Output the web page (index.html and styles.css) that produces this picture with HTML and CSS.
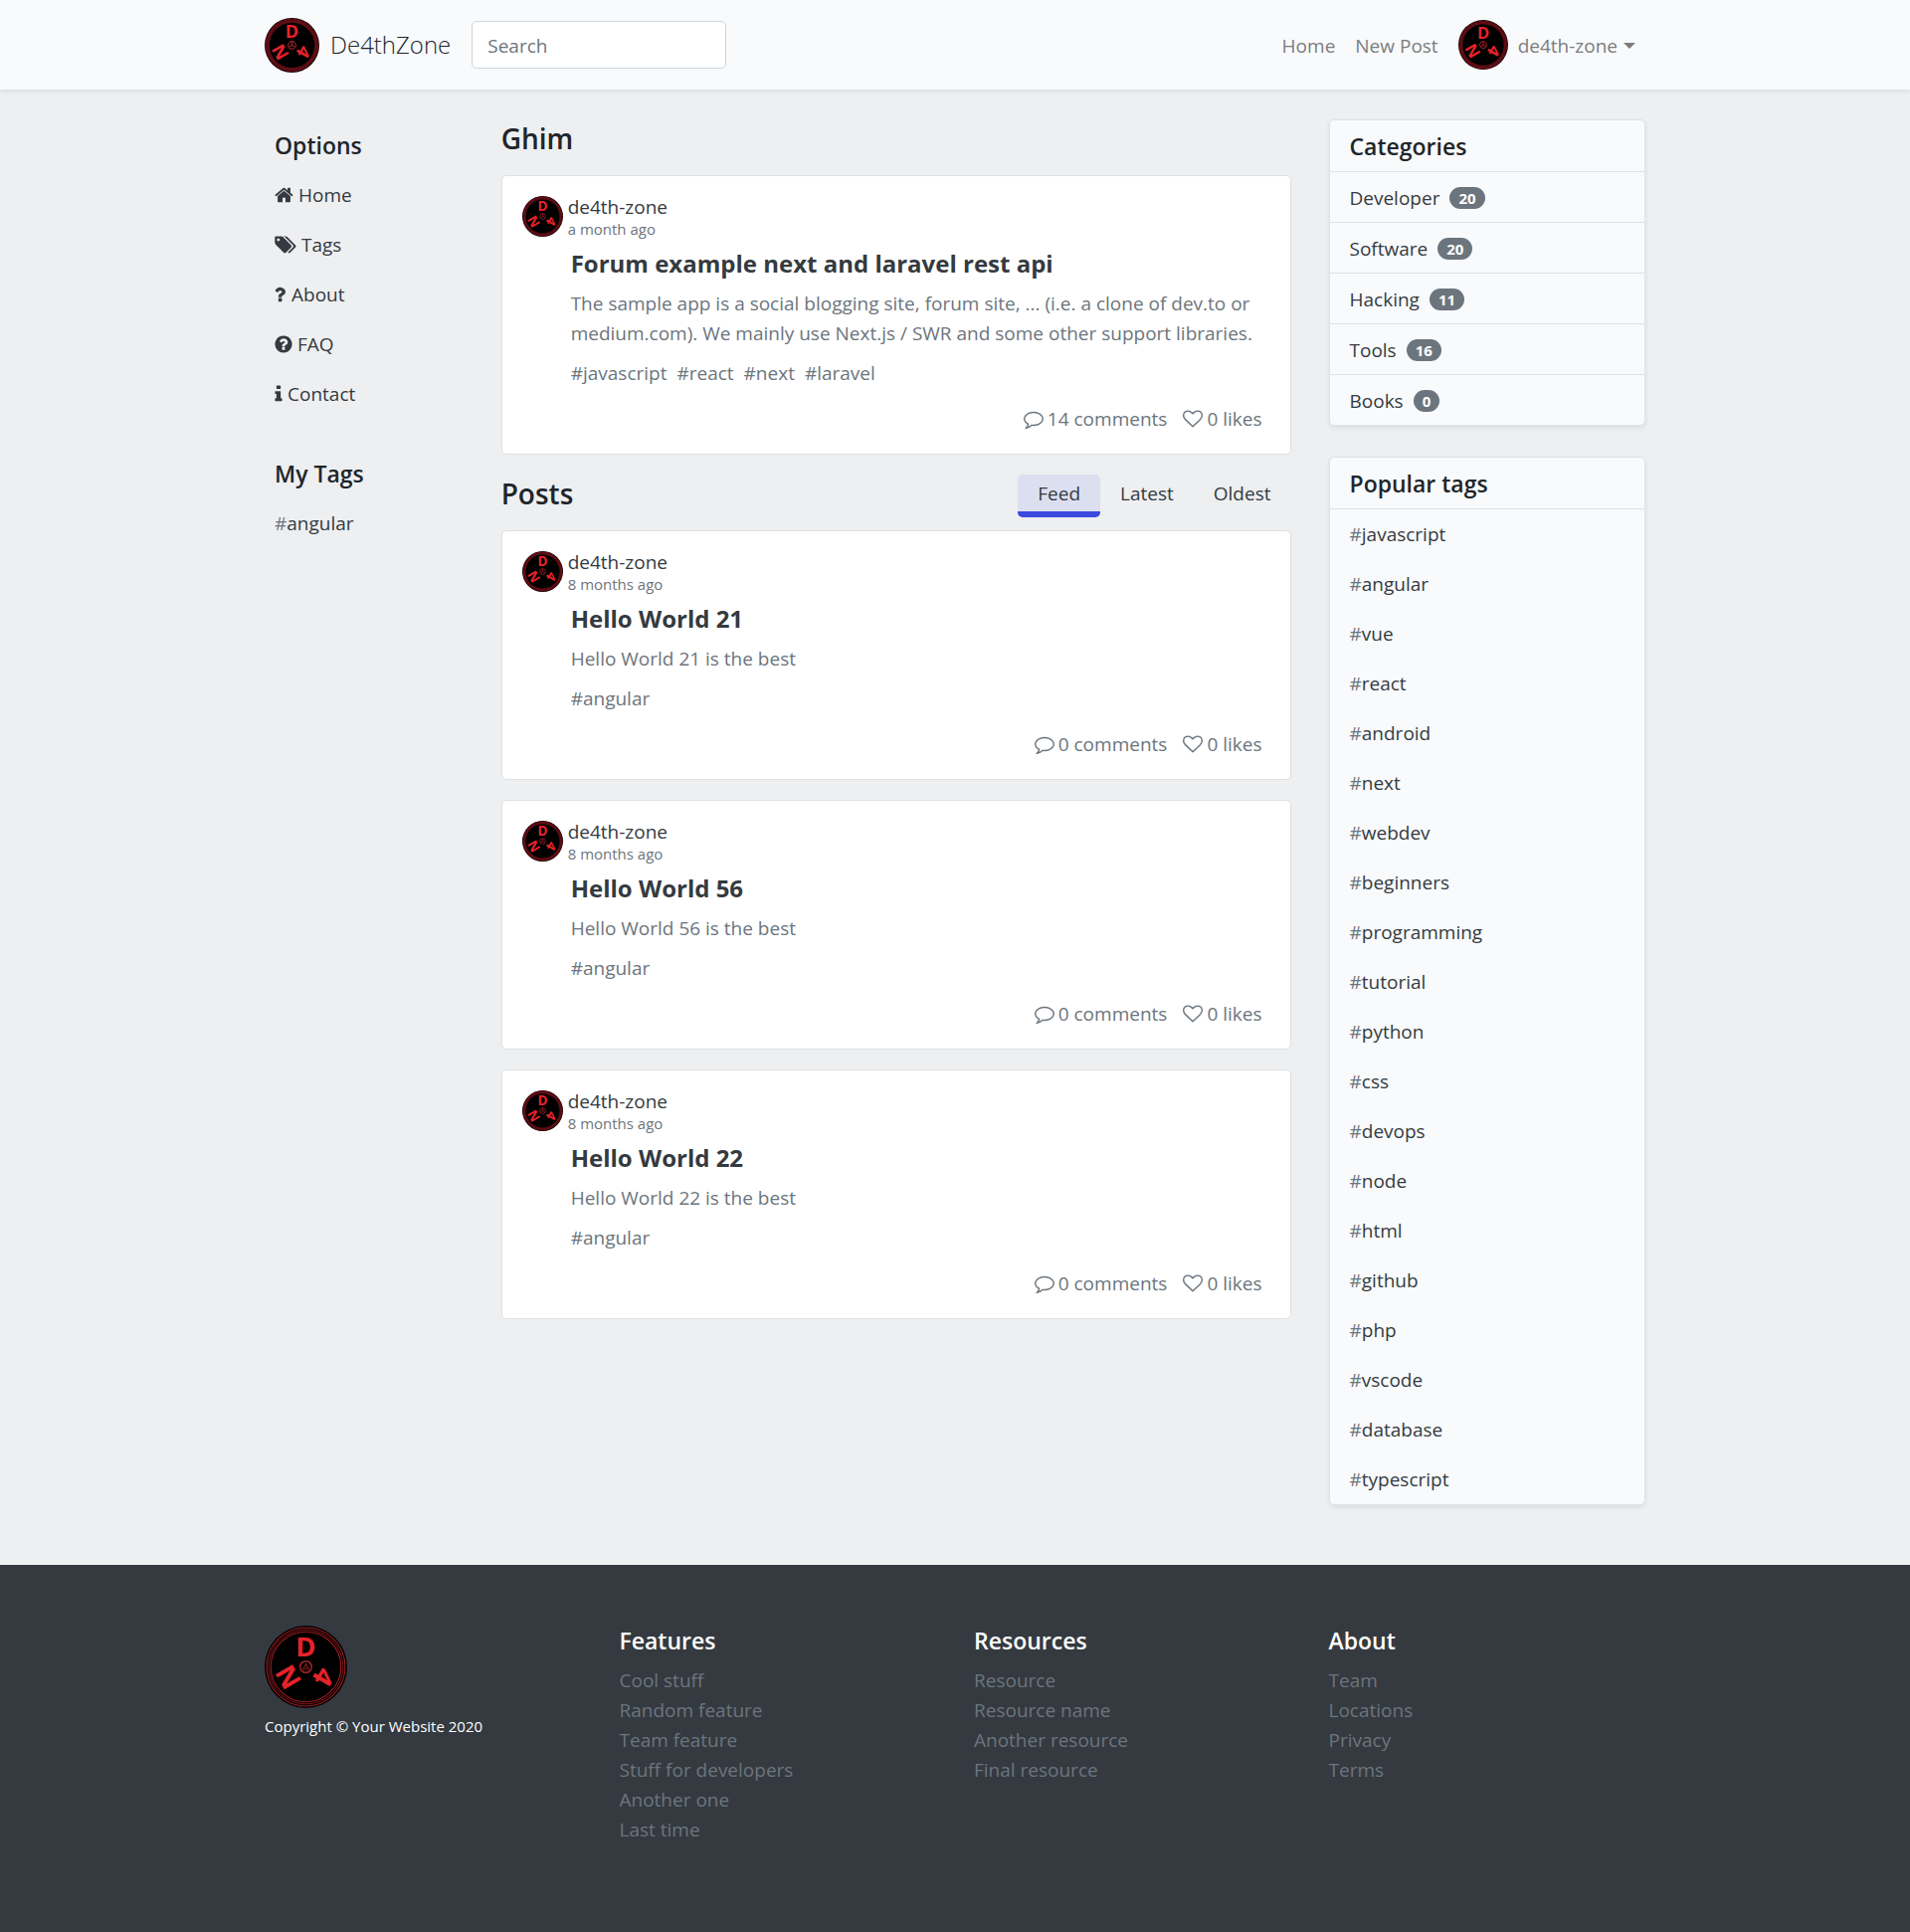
FILE: index.html
```html
<!DOCTYPE html>
<html lang="en">
<head>
<meta charset="utf-8">
<meta name="viewport" content="width=device-width, initial-scale=1">
<title>De4thZone</title>
<link rel="stylesheet" href="styles.css">
</head>
<body>
<svg class="sprite" aria-hidden="true">
  <symbol id="disc" viewBox="0 0 100 100">
    <circle cx="50" cy="50" r="50" fill="#120103"/>
    <circle cx="50" cy="50" r="45" fill="none" stroke="#5c0d13" stroke-width="7"/>
    <circle cx="50" cy="50" r="42" fill="#000"/>
    <circle cx="50" cy="50" r="42" fill="none" stroke="#7d151b" stroke-width="1"/>
    <circle cx="50" cy="50" r="7" fill="none" stroke="#a3242a" stroke-width="2"/>
    <path d="M50 50V44M50 50l5 3M50 50l-5 3" stroke="#a3242a" stroke-width="2"/>
  </symbol>
  <symbol id="disc-large" viewBox="0 0 100 100">
    <circle cx="50" cy="50" r="50" fill="#000"/>
    <g fill="none" stroke="#9d1c22">
      <circle cx="50" cy="50" r="47.500" stroke-width="1.300"/>
      <circle cx="50" cy="50" r="45" stroke-width="1"/>
      <circle cx="50" cy="50" r="42.500" stroke-width="1.300"/>
    </g>
    <circle cx="50" cy="50" r="7" fill="none" stroke="#a3242a" stroke-width="1.800"/>
    <path d="M50 50V45M50 50l4 3M50 50l-4 3M46 53h8l-4-7z" fill="none" stroke="#8d1a20" stroke-width="1"/>
  </symbol>
  <symbol id="home" viewBox="64 0 1664 1792"><path d="M1472 992v480q0 26-19 45t-45 19h-384v-384h-256v384h-384q-26 0-45-19t-19-45v-480q0-1 .5-3t.5-3l575-474 575 474q1 2 1 6zm223-69l-62 74q-8 9-21 11h-3q-13 0-21-7l-692-577-692 577q-12 8-24 7-13-2-21-11l-62-74q-8-10-7-23.500t11-21.500l719-599q32-26 76-26t76 26l244 204v-195q0-14 9-23t23-9h192q14 0 23 9t9 23v408l219 182q10 8 11 21.500t-7 23.500z"/></symbol>
  <symbol id="tags" viewBox="128 0 1920 1792"><path d="M576 448q0-53-37.500-90.500t-90.500-37.500-90.500 37.500-37.500 90.500 37.500 90.500 90.500 37.500 90.500-37.500 37.500-90.500zm1067 576q0 53-37 90l-491 492q-39 37-91 37-53 0-90-37l-715-716q-38-37-64.500-101t-26.500-117v-416q0-52 38-90t90-38h416q53 0 117 26.500t102 64.500l715 714q37 39 37 91zm384 0q0 53-37 90l-491 492q-39 37-91 37-36 0-59-14t-53-45l470-470q37-37 37-90 0-52-37-91l-715-714q-38-38-102-64.500t-117-26.500h224q53 0 117 26.500t102 64.500l715 714q37 39 37 91z"/></symbol>
  <symbol id="question" viewBox="64 0 1024 1792"><path d="M704 1256v240q0 16-12 28t-28 12h-240q-16 0-28-12t-12-28v-240q0-16 12-28t28-12h240q16 0 28 12t12 28zm316-600q0 54-15.500 101t-35 76.500-55 59.500-57.500 43.500-61 35.500q-41 23-68.500 65t-27.500 67q0 17-12 32.500t-28 15.500h-240q-15 0-25.500-18.500t-10.500-37.500v-45q0-83 65-156.500t143-108.500q59-27 84-56t25-76q0-42-46.500-74t-107.500-32q-65 0-108 29-35 25-107 115-13 16-31 16-12 0-25-8l-164-125q-13-10-15.500-25t5.500-28q160-266 464-266 80 0 161 31t146 83 106 127.500 41 158.500z"/></symbol>
  <symbol id="faq" viewBox="128 0 1536 1792"><path d="M1024 1376v-192q0-14-9-23t-23-9h-192q-14 0-23 9t-9 23v192q0 14 9 23t23 9h192q14 0 23-9t9-23zm256-672q0-88-55.500-163t-138.500-116-170-41q-243 0-371 213-15 24 8 42l132 100q7 6 19 6 16 0 25-12 53-68 86-92 34-24 86-24 48 0 85.500 26t37.500 59q0 38-20 61t-68 45q-63 28-115.500 86.500t-52.500 125.500v36q0 14 9 23t23 9h192q14 0 23-9t9-23q0-19 21.500-49.500t54.500-49.500q32-18 49-28.500t46-35 44.500-48 28-60.500 12.500-81zm384 192q0 209-103 385.500t-279.500 279.500-385.500 103-385.500-103-279.500-279.500-103-385.500 103-385.500 279.500-279.500 385.500-103 385.500 103 279.500 279.500 103 385.500z"/></symbol>
  <symbol id="info" viewBox="576 0 640 1792"><path d="M1216 1344v128q0 26-19 45t-45 19h-512q-26 0-45-19t-19-45v-128q0-26 19-45t45-19h64v-384h-64q-26 0-45-19t-19-45v-128q0-26 19-45t45-19h384q26 0 45 19t19 45v576h64q26 0 45 19t19 45zm-128-1152v192q0 26-19 45t-45 19h-256q-26 0-45-19t-19-45v-192q0-26 19-45t45-19h256q26 0 45 19t19 45z"/></symbol>
  <symbol id="comment" viewBox="0 0 1792 1792"><path d="M896 384q-204 0-381.500 69.500t-282 187.500-104.500 255q0 112 71.500 213.500t201.500 175.500l87 50-27 96q-24 91-70 172 152-63 275-171l43-38 57 6q69 8 130 8 204 0 381.500-69.500t282-187.500 104.500-255-104.500-255-282-187.500-381.500-69.500zm896 512q0 174-120 321.500t-326 233-450 85.500q-70 0-145-8-198 175-460 242-49 14-114 22h-5q-15 0-27-10.500t-16-27.500v-1q-3-4-.5-12t2-10 4.500-9.500l6-9 7-8.500 8-9q7-8 31-34.500t34.500-38 31-39.500 32.500-51 27-59 26-76q-157-89-247.500-220t-90.500-281q0-174 120-321.500t326-233 450-85.500 450 85.500 326 233 120 321.500z"/></symbol>
  <symbol id="heart" viewBox="0 0 1792 1792"><path d="M1664 596q0-81-21.500-143t-55-98.500-81.500-59.500-94-31-98-8-112 25.500-110.500 64-86.500 72-60 61.500q-18 22-49 22t-49-22q-24-28-60-61.500t-86.500-72-110.500-64-112-25.500-98 8-94 31-81.500 59.500-55 98.500-21.500 143q0 168 187 355l581 560 580-559q188-188 188-356zm128 0q0 221-229 450l-623 600q-18 18-44 18t-44-18l-624-602q-10-8-27.500-26t-55.500-65.500-68-97.500-53.500-121-23.500-138q0-220 127-344t351-124q62 0 126.500 21.500t120 58 95.500 68.500 76 68q36-36 76-68t95.500-68.500 120-58 126.500-21.500q224 0 351 124t127 344z"/></symbol>
</svg>

<header class="navbar">
  <div class="container navbar-inner">
    <a class="brand" href="#"><svg class="logo brand-logo" viewBox="0 0 100 100" aria-hidden="true"><use href="#disc"/><text x="50" y="37">D</text><text x="50" y="37" transform="rotate(120 50 50)">4</text><text x="50" y="37" transform="rotate(240 50 50)">N</text></svg>De4thZone</a>
    <input class="search" type="search" placeholder="Search" aria-label="Search">
    <nav class="nav" aria-label="Main">
      <a class="nav-link" href="#">Home</a>
      <a class="nav-link" href="#">New Post</a>
      <a class="nav-avatar" href="#" aria-label="Profile"><svg class="logo" viewBox="0 0 100 100" aria-hidden="true"><use href="#disc"/><text x="50" y="37">D</text><text x="50" y="37" transform="rotate(120 50 50)">4</text><text x="50" y="37" transform="rotate(240 50 50)">N</text></svg></a>
      <button class="nav-link user-menu" type="button">de4th-zone<span class="caret"></span></button>
    </nav>
  </div>
</header>

<main class="container layout">
  <aside class="sidebar">
    <section>
      <h2 class="side-title">Options</h2>
      <ul class="list">
        <li><a class="side-link" href="#"><svg class="icon icon-home" aria-hidden="true"><use href="#home"/></svg>Home</a></li>
        <li><a class="side-link" href="#"><svg class="icon icon-tags" aria-hidden="true"><use href="#tags"/></svg>Tags</a></li>
        <li><a class="side-link" href="#"><svg class="icon icon-question" aria-hidden="true"><use href="#question"/></svg>About</a></li>
        <li><a class="side-link" href="#"><svg class="icon icon-faq" aria-hidden="true"><use href="#faq"/></svg>FAQ</a></li>
        <li><a class="side-link" href="#"><svg class="icon icon-info" aria-hidden="true"><use href="#info"/></svg>Contact</a></li>
      </ul>
    </section>
    <section>
      <h2 class="side-title">My Tags</h2>
      <ul class="list">
        <li><a class="side-link" href="#"><span><span class="hash">#</span>angular</span></a></li>
      </ul>
    </section>
  </aside>

  <div class="feed">
    <div class="feed-header"><h1 class="feed-title">Ghim</h1></div>
    <article class="post">
      <div class="author">
        <svg class="logo author-avatar" viewBox="0 0 100 100" aria-hidden="true"><use href="#disc"/><text x="50" y="37">D</text><text x="50" y="37" transform="rotate(120 50 50)">4</text><text x="50" y="37" transform="rotate(240 50 50)">N</text></svg>
        <div><a class="author-name" href="#">de4th-zone</a><time class="time">a month ago</time></div>
      </div>
      <div class="post-body">
        <h2 class="post-title"><a href="#">Forum example next and laravel rest api</a></h2>
        <p class="post-text">The sample app is a social blogging site, forum site, ... (i.e. a clone of dev.to or medium.com). We mainly use Next.js / SWR and some other support libraries.</p>
        <div class="post-tags"><a href="#">#javascript</a><a href="#">#react</a><a href="#">#next</a><a href="#">#laravel</a></div>
        <div class="stats"><a href="#"><svg class="icon icon-stat" aria-hidden="true"><use href="#comment"/></svg>14 comments</a><a href="#"><svg class="icon icon-stat" aria-hidden="true"><use href="#heart"/></svg>0 likes</a></div>
      </div>
    </article>

    <div class="feed-header">
      <h1 class="feed-title">Posts</h1>
      <div class="tabs">
        <button class="tab tab-active" type="button">Feed</button>
        <button class="tab" type="button">Latest</button>
        <button class="tab" type="button">Oldest</button>
      </div>
    </div>
    <article class="post">
      <div class="author">
        <svg class="logo author-avatar" viewBox="0 0 100 100" aria-hidden="true"><use href="#disc"/><text x="50" y="37">D</text><text x="50" y="37" transform="rotate(120 50 50)">4</text><text x="50" y="37" transform="rotate(240 50 50)">N</text></svg>
        <div><a class="author-name" href="#">de4th-zone</a><time class="time">8 months ago</time></div>
      </div>
      <div class="post-body">
        <h2 class="post-title"><a href="#">Hello World 21</a></h2>
        <p class="post-text">Hello World 21 is the best</p>
        <div class="post-tags"><a href="#">#angular</a></div>
        <div class="stats"><a href="#"><svg class="icon icon-stat" aria-hidden="true"><use href="#comment"/></svg>0 comments</a><a href="#"><svg class="icon icon-stat" aria-hidden="true"><use href="#heart"/></svg>0 likes</a></div>
      </div>
    </article>
    <article class="post">
      <div class="author">
        <svg class="logo author-avatar" viewBox="0 0 100 100" aria-hidden="true"><use href="#disc"/><text x="50" y="37">D</text><text x="50" y="37" transform="rotate(120 50 50)">4</text><text x="50" y="37" transform="rotate(240 50 50)">N</text></svg>
        <div><a class="author-name" href="#">de4th-zone</a><time class="time">8 months ago</time></div>
      </div>
      <div class="post-body">
        <h2 class="post-title"><a href="#">Hello World 56</a></h2>
        <p class="post-text">Hello World 56 is the best</p>
        <div class="post-tags"><a href="#">#angular</a></div>
        <div class="stats"><a href="#"><svg class="icon icon-stat" aria-hidden="true"><use href="#comment"/></svg>0 comments</a><a href="#"><svg class="icon icon-stat" aria-hidden="true"><use href="#heart"/></svg>0 likes</a></div>
      </div>
    </article>
    <article class="post">
      <div class="author">
        <svg class="logo author-avatar" viewBox="0 0 100 100" aria-hidden="true"><use href="#disc"/><text x="50" y="37">D</text><text x="50" y="37" transform="rotate(120 50 50)">4</text><text x="50" y="37" transform="rotate(240 50 50)">N</text></svg>
        <div><a class="author-name" href="#">de4th-zone</a><time class="time">8 months ago</time></div>
      </div>
      <div class="post-body">
        <h2 class="post-title"><a href="#">Hello World 22</a></h2>
        <p class="post-text">Hello World 22 is the best</p>
        <div class="post-tags"><a href="#">#angular</a></div>
        <div class="stats"><a href="#"><svg class="icon icon-stat" aria-hidden="true"><use href="#comment"/></svg>0 comments</a><a href="#"><svg class="icon icon-stat" aria-hidden="true"><use href="#heart"/></svg>0 likes</a></div>
      </div>
    </article>
  </div>

  <aside class="widgets">
    <section class="widget">
      <h2 class="widget-title">Categories</h2>
      <ul class="list">
        <li class="category"><a href="#">Developer</a><span class="badge">20</span></li>
        <li class="category"><a href="#">Software</a><span class="badge">20</span></li>
        <li class="category"><a href="#">Hacking</a><span class="badge">11</span></li>
        <li class="category"><a href="#">Tools</a><span class="badge">16</span></li>
        <li class="category"><a href="#">Books</a><span class="badge">0</span></li>
      </ul>
    </section>
    <section class="widget">
      <h2 class="widget-title">Popular tags</h2>
      <ul class="list tag-list">
        <li><a href="#"><span class="hash">#</span>javascript</a></li>
        <li><a href="#"><span class="hash">#</span>angular</a></li>
        <li><a href="#"><span class="hash">#</span>vue</a></li>
        <li><a href="#"><span class="hash">#</span>react</a></li>
        <li><a href="#"><span class="hash">#</span>android</a></li>
        <li><a href="#"><span class="hash">#</span>next</a></li>
        <li><a href="#"><span class="hash">#</span>webdev</a></li>
        <li><a href="#"><span class="hash">#</span>beginners</a></li>
        <li><a href="#"><span class="hash">#</span>programming</a></li>
        <li><a href="#"><span class="hash">#</span>tutorial</a></li>
        <li><a href="#"><span class="hash">#</span>python</a></li>
        <li><a href="#"><span class="hash">#</span>css</a></li>
        <li><a href="#"><span class="hash">#</span>devops</a></li>
        <li><a href="#"><span class="hash">#</span>node</a></li>
        <li><a href="#"><span class="hash">#</span>html</a></li>
        <li><a href="#"><span class="hash">#</span>github</a></li>
        <li><a href="#"><span class="hash">#</span>php</a></li>
        <li><a href="#"><span class="hash">#</span>vscode</a></li>
        <li><a href="#"><span class="hash">#</span>database</a></li>
        <li><a href="#"><span class="hash">#</span>typescript</a></li>
      </ul>
    </section>
  </aside>
</main>

<footer class="footer">
  <div class="container footer-grid">
    <div>
      <svg class="logo footer-logo" viewBox="0 0 100 100" aria-hidden="true"><use href="#disc-large"/><text x="50" y="37">D</text><text x="50" y="37" transform="rotate(120 50 50)">4</text><text x="50" y="37" transform="rotate(240 50 50)">N</text></svg>
      <small class="copyright">Copyright © Your Website 2020</small>
    </div>
    <section>
      <h2 class="footer-title">Features</h2>
      <ul class="list footer-list">
        <li><a href="#">Cool stuff</a></li>
        <li><a href="#">Random feature</a></li>
        <li><a href="#">Team feature</a></li>
        <li><a href="#">Stuff for developers</a></li>
        <li><a href="#">Another one</a></li>
        <li><a href="#">Last time</a></li>
      </ul>
    </section>
    <section>
      <h2 class="footer-title">Resources</h2>
      <ul class="list footer-list">
        <li><a href="#">Resource</a></li>
        <li><a href="#">Resource name</a></li>
        <li><a href="#">Another resource</a></li>
        <li><a href="#">Final resource</a></li>
      </ul>
    </section>
    <section>
      <h2 class="footer-title">About</h2>
      <ul class="list footer-list">
        <li><a href="#">Team</a></li>
        <li><a href="#">Locations</a></li>
        <li><a href="#">Privacy</a></li>
        <li><a href="#">Terms</a></li>
      </ul>
    </section>
  </div>
</footer>
</body>
</html>
```
FILE: styles.css
```css
* {
  box-sizing: border-box;
}

body {
  margin: 0;
  background: #eeeff1;
  color: #212529;
  font-family: "Open Sans", "Noto Sans", sans-serif;
  font-size: 19px;
  line-height: 30px;
}

a {
  color: inherit;
  text-decoration: none;
}

button,
input {
  font: inherit;
}

h1,
h2,
p {
  margin: 0;
}

.sprite {
  position: absolute;
  width: 0;
  height: 0;
}

.logo {
  flex: none;
  fill: #e6222a;
  font-size: 33px;
  font-weight: 700;
  text-anchor: middle;
}

.container {
  max-width: 1428px;
  margin: 0 auto;
  padding: 0 20px;
}

.list {
  margin: 0;
  padding: 0;
  list-style: none;
}

.icon {
  flex: none;
  height: 20px;
  fill: currentColor;
}

.icon-home { width: 19px; }
.icon-tags { width: 22px; }
.icon-question { width: 12px; }
.icon-faq { width: 18px; }
.icon-info { width: 8px; }
.icon-stat { width: 20px; }

/* Top bar */
.navbar {
  background: #f8fafc;
  box-shadow: 0 2px 5px rgba(0, 0, 0, 0.08);
}

.navbar-inner {
  display: flex;
  align-items: center;
  min-height: 90px;
}

.brand {
  display: flex;
  align-items: center;
  gap: 11px;
  margin-right: 21px;
  font-size: 24px;
  font-weight: 300;
  line-height: 32px;
}

.brand-logo {
  width: 55px;
  height: 55px;
}

.search {
  width: 256px;
  height: 48px;
  padding: 2px 15px 0;
  border: 1px solid #ced4da;
  border-radius: 5px;
  background: #fff;
  color: #495057;
}

.search::placeholder {
  color: #6c757d;
  opacity: 1;
}

.nav {
  display: flex;
  align-items: center;
  margin-left: auto;
}

.nav-link {
  padding: 11px 10px 9px;
  border: 0;
  background: none;
  color: #7c7d7e;
}

.nav-avatar {
  display: flex;
  margin-left: 10px;
}

.nav-avatar svg {
  width: 50px;
  height: 50px;
}

.user-menu {
  display: flex;
  align-items: center;
  gap: 6px;
}

.caret {
  border: 6px solid transparent;
  border-top-color: currentColor;
  border-bottom: 0;
}

/* Three column page */
.layout {
  display: grid;
  grid-template-columns: repeat(12, minmax(0, 1fr));
  column-gap: 38px;
  padding-top: 30px;
  padding-bottom: 60px;
}

.sidebar {
  grid-column: span 2;
  display: flex;
  flex-direction: column;
  gap: 30px;
  padding-top: 1px;
}

.side-title {
  padding: 10px;
  font-size: 23px;
  font-weight: 600;
}

.side-link {
  display: flex;
  align-items: center;
  gap: 5px;
  padding: 10px;
  color: #343a40;
}

.hash {
  color: #6c757d;
}

/* Posts */
.feed {
  grid-column: span 7;
}

.feed-header {
  display: flex;
  align-items: flex-start;
  justify-content: space-between;
  height: 56px;
}

.feed-title {
  font-size: 28px;
  font-weight: 600;
  line-height: 38px;
}

.tabs {
  display: flex;
}

.tab {
  padding: 4px 20px 3px;
  border: 0;
  border-bottom: 6px solid transparent;
  border-radius: 5px;
  background: none;
  color: #343a40;
}

.tab-active {
  border-bottom-color: #3b49df;
  background: #dcdff0;
  background-clip: padding-box;
  font-weight: 500;
}

.post {
  margin-bottom: 20px;
  padding: 20px;
  border: 1px solid #dfe0e2;
  border-radius: 5px;
  background: #fff;
}

.author {
  display: flex;
  gap: 5px;
  height: 53px;
}

.author-avatar {
  width: 41px;
  height: 41px;
}

.author-name,
.time {
  display: block;
  line-height: 22px;
}

.author-name {
  color: #343a40;
}

.time {
  color: #6c757d;
  font-size: 15px;
}

.post-body {
  padding-left: 49px;
  color: #6c757d;
}

.post-title {
  margin-bottom: 10px;
  color: #343a40;
  font-size: 24px;
  font-weight: 700;
}

.post-text {
  margin-bottom: 10px;
}

.post-tags {
  display: flex;
  gap: 10px;
  margin-bottom: 16px;
}

.stats {
  display: flex;
  justify-content: flex-end;
  gap: 16px;
  padding-right: 8px;
}

.stats a {
  display: flex;
  align-items: center;
  gap: 4px;
}

/* Right column */
.widgets {
  grid-column: span 3;
}

.widget {
  margin-bottom: 31px;
  border: 1px solid #dee2e6;
  border-radius: 5px;
  background: #f8fafc;
  box-shadow: 0 2px 5px rgba(0, 0, 0, 0.08);
}

.widget:last-child {
  margin-bottom: 0;
}

.widget-title {
  padding: 11px 20px 10px;
  font-size: 23px;
  font-weight: 600;
}

.category {
  display: flex;
  align-items: center;
  gap: 10px;
  padding: 11px 20px 9px;
  border-top: 1px solid #dee2e6;
  color: #343a40;
}

.badge {
  padding: 0 9px;
  border-radius: 11px;
  background: #6c757d;
  color: #fff;
  font-size: 15px;
  font-weight: 700;
  line-height: 22px;
}

.tag-list {
  border-top: 1px solid #dee2e6;
  color: #343a40;
}

.tag-list li {
  padding: 10px 20px;
}

/* Footer */
.footer {
  padding: 61px 0 88px;
  background: #343a40;
}

.footer-grid {
  display: grid;
  grid-template-columns: repeat(4, minmax(0, 1fr));
  gap: 38px;
}

.footer-logo {
  display: block;
  width: 83px;
  height: 83px;
}

.copyright {
  display: block;
  margin-top: 3px;
  color: #fff;
  font-size: 15px;
}

.footer-title {
  margin-bottom: 10px;
  color: #fff;
  font-size: 23px;
  font-weight: 600;
}

.footer-list {
  color: #6c757d;
}
```
